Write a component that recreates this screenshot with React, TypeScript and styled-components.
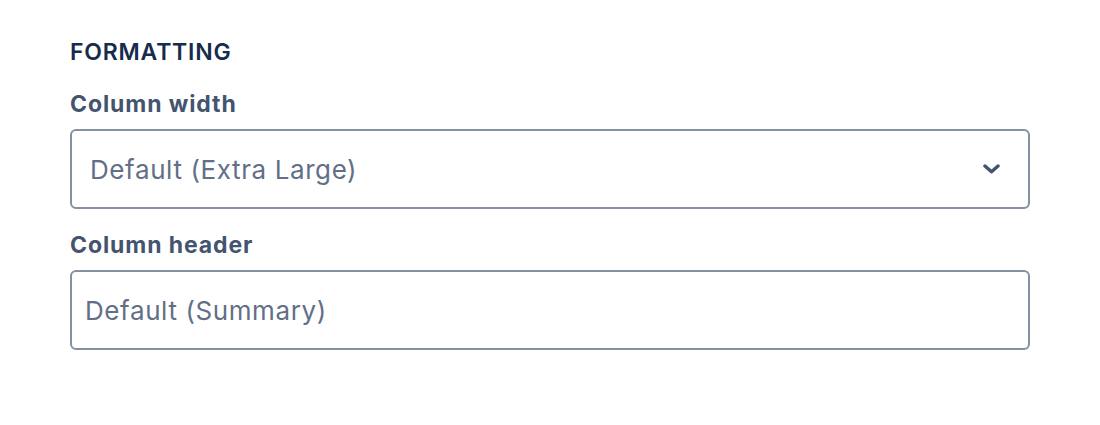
import styled, { createGlobalStyle } from 'styled-components'

const GlobalStyle = createGlobalStyle`
	body {
		margin: 0;
		background: #ffffff;
		font-family: Inter, "Liberation Sans", sans-serif;
	}
`

const Panel = styled.section`
	width: 960px;
	padding: 38px 0 0 70px;
	display: flex;
	flex-direction: column;
`

const SectionTitle = styled.h3`
	margin: 0 0 24px;
	font-size: 23px;
	line-height: 28px;
	font-weight: 600;
	color: #172b4d;
	letter-spacing: 0.8px;
	text-transform: uppercase;
`

const Field = styled.div`
	display: flex;
	flex-direction: column;
	margin-bottom: 22px;
`

const Label = styled.label`
	font-size: 23px;
	line-height: 28px;
	font-weight: 700;
	color: #44546f;
	letter-spacing: 0.9px;
	margin-bottom: 11px;
`

const Box = styled.div<{ $indent: number }>`
	box-sizing: border-box;
	height: 80px;
	border: 2px solid #8590a2;
	border-radius: 6px;
	display: flex;
	align-items: center;
	justify-content: space-between;
	padding: 0 28px 0 ${p => p.$indent}px;
	font-size: 26px;
	letter-spacing: 0.6px;
	color: #626f86;
`

const Chevron = () => (
	<svg width="17" height="10" viewBox="0 0 17 10" fill="none">
		<path d="M2 2l6.5 5.8L15 2" stroke="#44546f" strokeWidth="3.4" strokeLinecap="round" strokeLinejoin="round" />
	</svg>
)

export default function App() {
	return (
		<>
			<GlobalStyle />
			<Panel>
				<SectionTitle>Formatting</SectionTitle>
				<Field>
					<Label>Column width</Label>
					<Box $indent={18}>
						<span>Default (Extra Large)</span>
						<Chevron />
					</Box>
				</Field>
				<Field>
					<Label>Column header</Label>
					<Box $indent={13}>
						<span>Default (Summary)</span>
					</Box>
				</Field>
			</Panel>
		</>
	)
}
